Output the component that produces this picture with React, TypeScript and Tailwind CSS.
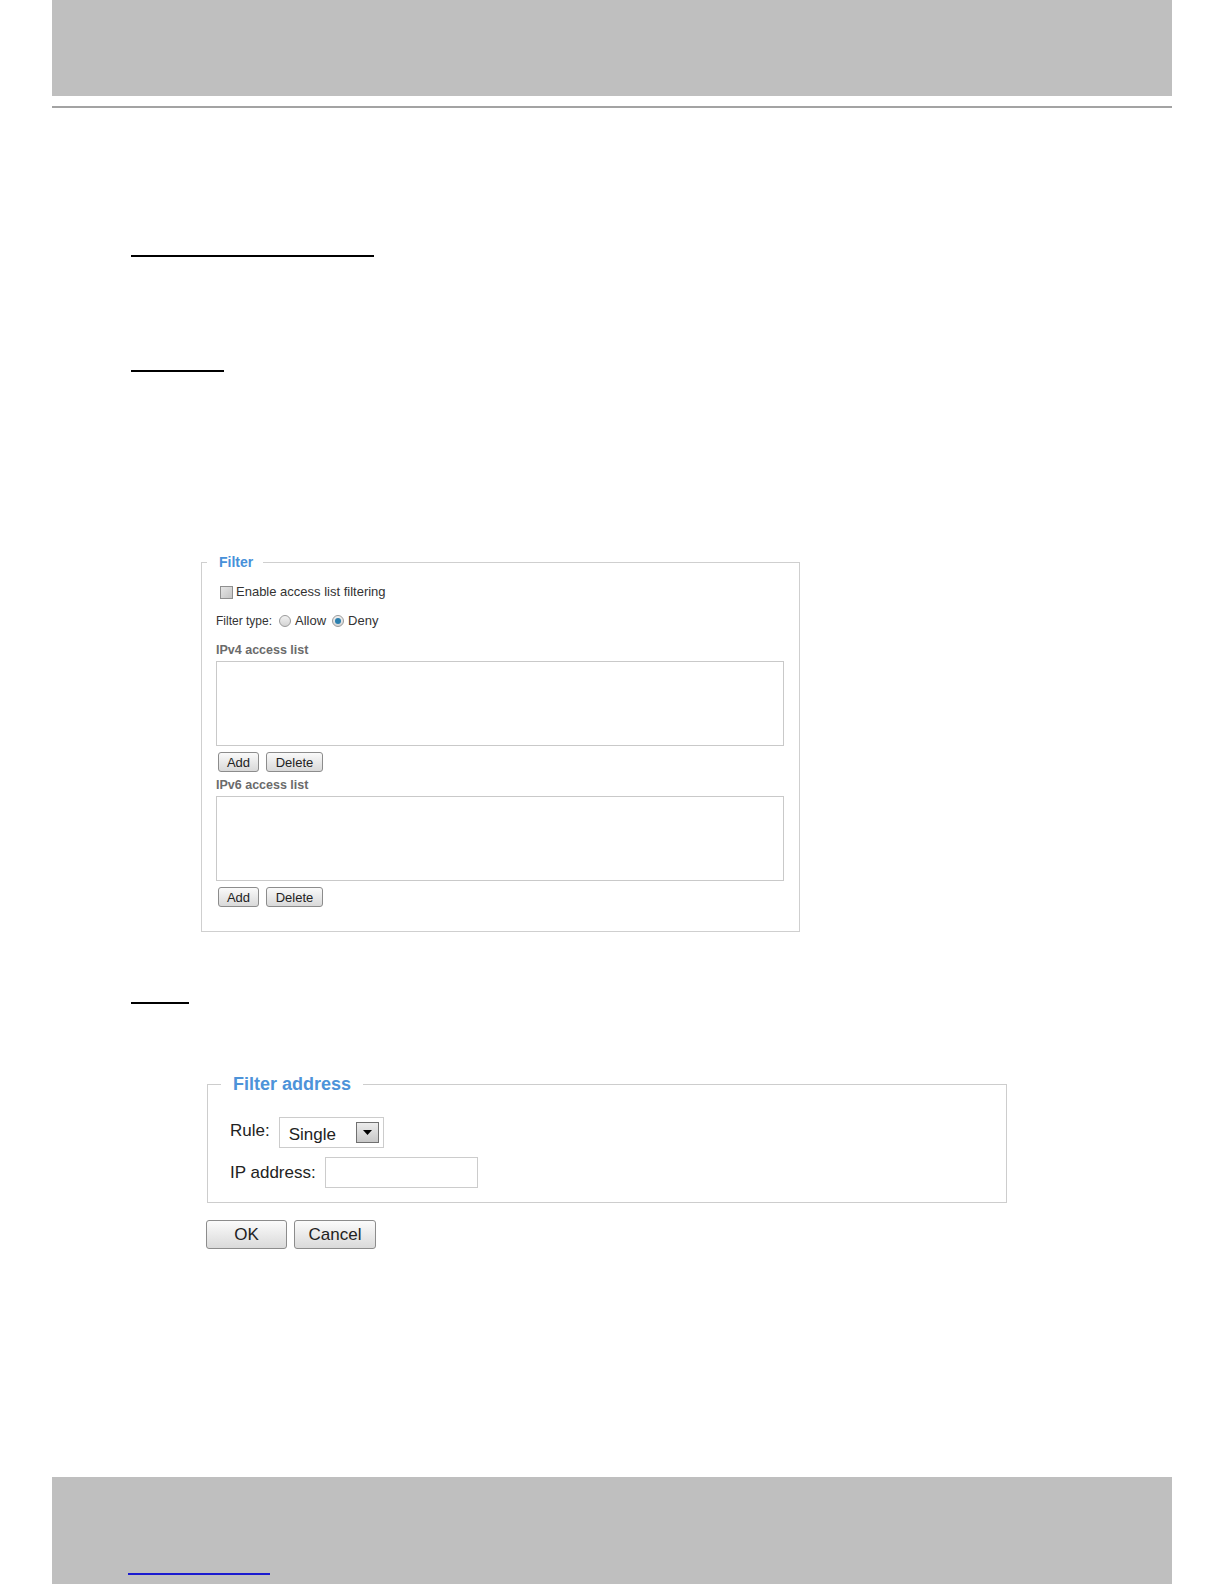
import { useState } from 'react'

const font = "font-['Liberation_Sans',Arial,sans-serif]"

function SmallButton({ label, width }: { label: string; width: string }) {
  return (
    <button
      className={`${width} h-[20px] flex items-center justify-center rounded-[3px] border border-[#8c8c8c] bg-linear-to-b from-[#fafafa] to-[#d9d9d9] text-[13px] leading-none text-[#222]`}
    >
      {label}
    </button>
  )
}

function BigButton({ label, width }: { label: string; width: string }) {
  return (
    <button
      className={`${width} h-[29px] flex items-center justify-center rounded-[3px] border border-[#8c8c8c] bg-linear-to-b from-[#fbfbfb] to-[#dadada] text-[17px] leading-none text-[#222]`}
    >
      {label}
    </button>
  )
}

function Radio({ checked, onClick }: { checked: boolean; onClick: () => void }) {
  return (
    <span
      onClick={onClick}
      className="w-[12px] h-[12px] rounded-full border border-[#9a9a9a] bg-linear-to-b from-[#f2f2f2] to-[#d4d4d4] flex items-center justify-center"
    >
      {checked && <span className="w-[6px] h-[6px] rounded-full bg-[#2a7fae]" />}
    </span>
  )
}

function AccessList({ label }: { label: string }) {
  return (
    <>
      <div className="h-[16px] flex items-center text-[12.5px] font-bold text-[#6b6b6b]">{label}</div>
      <textarea className="mt-[3px] w-[568px] h-[85px] border border-[#c9c9c9] bg-white resize-none" />
      <div className="mt-[6px] ml-[2px] flex gap-[7px]">
        <SmallButton label="Add" width="w-[41px]" />
        <SmallButton label="Delete" width="w-[57px]" />
      </div>
    </>
  )
}

export default function App() {
  const [enabled, setEnabled] = useState(false)
  const [filterType, setFilterType] = useState<'allow' | 'deny'>('deny')

  return (
    <div className={`w-[1224px] h-[1584px] bg-white flex flex-col ${font}`}>
      {/* page header band */}
      <div className="ml-[52px] w-[1120px] h-[96px] bg-[#bfbfbf]" />
      <div className="ml-[52px] mt-[10px] w-[1120px] h-[2px] bg-[#a3a3a3]" />

      {/* section underlines */}
      <div className="ml-[131px] mt-[147px] w-[243px] h-[2px] bg-black" />
      <div className="ml-[131px] mt-[113px] w-[93px] h-[2px] bg-black" />

      {/* Filter panel */}
      <fieldset className="ml-[201px] mt-[182px] w-[599px] border border-[#cfcfcf]">
        <legend className="ml-[5px] pl-[12px] pr-[10px] text-[14px] leading-[16px] font-bold text-[#4790d9]">
          Filter
        </legend>

        <div className="pl-[14px] pr-[15px] pb-[24px] flex flex-col">
          <label className="mt-[14px] h-[16px] flex items-center gap-[3px] text-[13px] text-[#333]">
            <span
              onClick={() => setEnabled(!enabled)}
              className="ml-[4px] w-[13px] h-[13px] border border-[#8f8f8f] bg-linear-to-br from-[#e6e6e6] to-[#c4c4c4] flex items-center justify-center text-[10px] leading-none"
            >
              {enabled ? '✓' : ''}
            </span>
            Enable access list filtering
          </label>

          <div className="mt-[13px] h-[16px] flex items-center text-[13px] text-[#333]">
            <span className="mr-[7px] text-[12px]">Filter type:</span>
            <Radio checked={filterType === 'allow'} onClick={() => setFilterType('allow')} />
            <span className="ml-[4px] mr-[6px]">Allow</span>
            <Radio checked={filterType === 'deny'} onClick={() => setFilterType('deny')} />
            <span className="ml-[4px]">Deny</span>
          </div>

          <div className="mt-[13px] flex flex-col">
            <AccessList label="IPv4 access list" />
          </div>
          <div className="mt-[5px] flex flex-col">
            <AccessList label="IPv6 access list" />
          </div>
        </div>
      </fieldset>

      <div className="ml-[131px] mt-[70px] w-[58px] h-[2px] bg-black" />

      {/* Filter address dialog */}
      <fieldset className="ml-[207px] mt-[70px] w-[800px] border border-[#cdcdcd]">
        <legend className="ml-[13px] pl-[12px] pr-[12px] text-[18px] leading-[21px] font-bold text-[#4d93d9]">
          Filter address
        </legend>

        <div className="pl-[22px] pb-[14px] flex flex-col">
          <div className="mt-[22px] h-[31px] flex items-center gap-[9px] text-[17px] text-[#222]">
            <span className="-mt-[4px]">Rule:</span>
            <div className="w-[105px] h-[31px] border border-[#cccccc] bg-white flex items-center pl-[9px] pr-[4px]">
              <span className="flex-1 mt-[4px]">Single</span>
              <span className="w-[23px] h-[21px] border border-[#707070] bg-linear-to-b from-[#ececec] to-[#c8c8c8] flex items-center justify-center">
                <svg width="9" height="5" viewBox="0 0 9 5">
                  <path d="M0 0 H9 L4.5 5 Z" fill="#000" />
                </svg>
              </span>
            </div>
          </div>

          <div className="mt-[9px] h-[31px] flex items-center gap-[9px] text-[17px] text-[#222]">
            <span>IP address:</span>
            <input className="w-[153px] h-[31px] border border-[#cccccc] bg-white" />
          </div>
        </div>
      </fieldset>

      <div className="ml-[206px] mt-[17px] flex gap-[7px]">
        <BigButton label="OK" width="w-[81px]" />
        <BigButton label="Cancel" width="w-[82px]" />
      </div>

      {/* page footer band */}
      <div className="ml-[52px] mt-[228px] w-[1120px] flex-1 bg-[#bfbfbf] flex flex-col">
        <div className="ml-[76px] mt-[96px] w-[142px] h-[2px] bg-[#1a1ad0]" />
      </div>
    </div>
  )
}
